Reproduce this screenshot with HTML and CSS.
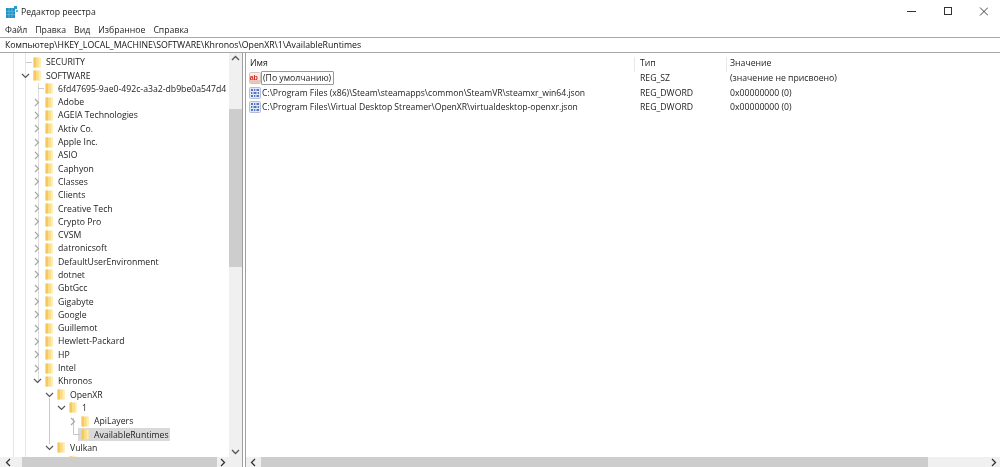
FILE: index.html
```html
<!DOCTYPE html>
<html lang="ru">
<head>
<meta charset="utf-8">
<title>Редактор реестра</title>
<link rel="stylesheet" href="styles.css">
</head>
<body>
<svg class="defs" width="0" height="0" aria-hidden="true">
  <defs>
    <symbol id="folder" viewBox="0 0 8 11">
      <path d="M0.5 0.5H7.5V10.5H0.5Z" fill="#fbdc85"/>
      <path d="M0.5 0.5H3V10.5H0.5Z" fill="#f7c95c"/>
      <path d="M5.8 1H7.500V10H5.800Z" fill="#ffedb4"/>
    </symbol>
    <symbol id="open" viewBox="0 0 9 6"><path d="M1 1L4.5 4.5L8 1" fill="none" stroke="#555" stroke-width="1.2"/></symbol>
    <symbol id="closed" viewBox="0 0 6 9"><path d="M1 1L4.5 4.5L1 8" fill="none" stroke="#a6a6a6" stroke-width="1.2"/></symbol>
    <symbol id="ico-bin" viewBox="0 0 12 12">
      <rect x="0.500" y="0.500" width="11" height="11" rx="1" fill="#e4e9f6" stroke="#b4bdd6"/>
      <path d="M2 3h2M5 3h1.300M7.500 3h2.500M2 6h1.300M4.500 6h3M8.700 6h1.300M2 9h2M5 9h1.300M7.500 9h2.500" stroke="#2a4fb4" stroke-width="1.700" fill="none"/>
    </symbol>
  </defs>
</svg>
<div class="window">
  <header class="titlebar">
    <svg class="appicon" viewBox="0 0 12 12" width="12" height="12">
      <rect x="0" y="2" width="9" height="10" fill="#1f8fc4"/>
      <path d="M3 2V12M6 2V12M0 5.300H9M0 8.600H9" stroke="#7cc6e6" stroke-width="0.6"/>
      <rect x="8" y="0" width="3" height="3" fill="#2a9bd0"/>
      <rect x="10" y="4" width="2" height="2" fill="#58b4dc"/>
    </svg>
    <span class="apptitle">Редактор реестра</span>
    <div class="controls">
      <svg class="ctl" viewBox="0 0 36 20" width="36" height="20"><path d="M27 10.500H36" stroke="#333"/></svg>
      <svg class="ctl" viewBox="0 0 36 20" width="36" height="20"><rect x="28.500" y="6.500" width="7" height="7" fill="none" stroke="#333"/></svg>
      <svg class="ctl" viewBox="0 0 36 20" width="36" height="20"><path d="M28 6.500L36 14.500M36 6.500L28 14.500" stroke="#444" fill="none"/></svg>
    </div>
  </header>
  <nav class="menubar">
    <span>Файл</span><span>Правка</span><span>Вид</span><span>Избранное</span><span>Справка</span>
  </nav>
  <div class="address">Компьютер\HKEY_LOCAL_MACHINE\SOFTWARE\Khronos\OpenXR\1\AvailableRuntimes</div>
  <main class="panes">
    <section class="treepane">
      <div class="treebody">
        <div class="tree">
          <span class="guide g1"></span><span class="guide g2"></span><span class="guide g3"></span><span class="guide g4"></span><span class="guide g5"></span>
          <div class="row l0"><span class="tog"><span class="stub"></span></span><svg class="fld"><use href="#folder"/></svg><span class="lbl">SECURITY</span></div>
          <div class="row l0"><span class="tog"><svg class="op"><use href="#open"/></svg></span><svg class="fld"><use href="#folder"/></svg><span class="lbl">SOFTWARE</span></div>
          <div class="row l1"><span class="tog"><span class="stub"></span></span><svg class="fld"><use href="#folder"/></svg><span class="lbl">6fd47695-9ae0-492c-a3a2-db9be0a547d4</span></div>
          <div class="row l1"><span class="tog"><svg class="cl"><use href="#closed"/></svg></span><svg class="fld"><use href="#folder"/></svg><span class="lbl">Adobe</span></div>
          <div class="row l1"><span class="tog"><svg class="cl"><use href="#closed"/></svg></span><svg class="fld"><use href="#folder"/></svg><span class="lbl">AGEIA Technologies</span></div>
          <div class="row l1"><span class="tog"><svg class="cl"><use href="#closed"/></svg></span><svg class="fld"><use href="#folder"/></svg><span class="lbl">Aktiv Co.</span></div>
          <div class="row l1"><span class="tog"><svg class="cl"><use href="#closed"/></svg></span><svg class="fld"><use href="#folder"/></svg><span class="lbl">Apple Inc.</span></div>
          <div class="row l1"><span class="tog"><svg class="cl"><use href="#closed"/></svg></span><svg class="fld"><use href="#folder"/></svg><span class="lbl">ASIO</span></div>
          <div class="row l1"><span class="tog"><svg class="cl"><use href="#closed"/></svg></span><svg class="fld"><use href="#folder"/></svg><span class="lbl">Caphyon</span></div>
          <div class="row l1"><span class="tog"><svg class="cl"><use href="#closed"/></svg></span><svg class="fld"><use href="#folder"/></svg><span class="lbl">Classes</span></div>
          <div class="row l1"><span class="tog"><svg class="cl"><use href="#closed"/></svg></span><svg class="fld"><use href="#folder"/></svg><span class="lbl">Clients</span></div>
          <div class="row l1"><span class="tog"><svg class="cl"><use href="#closed"/></svg></span><svg class="fld"><use href="#folder"/></svg><span class="lbl">Creative Tech</span></div>
          <div class="row l1"><span class="tog"><svg class="cl"><use href="#closed"/></svg></span><svg class="fld"><use href="#folder"/></svg><span class="lbl">Crypto Pro</span></div>
          <div class="row l1"><span class="tog"><svg class="cl"><use href="#closed"/></svg></span><svg class="fld"><use href="#folder"/></svg><span class="lbl">CVSM</span></div>
          <div class="row l1"><span class="tog"><svg class="cl"><use href="#closed"/></svg></span><svg class="fld"><use href="#folder"/></svg><span class="lbl">datronicsoft</span></div>
          <div class="row l1"><span class="tog"><svg class="cl"><use href="#closed"/></svg></span><svg class="fld"><use href="#folder"/></svg><span class="lbl">DefaultUserEnvironment</span></div>
          <div class="row l1"><span class="tog"><svg class="cl"><use href="#closed"/></svg></span><svg class="fld"><use href="#folder"/></svg><span class="lbl">dotnet</span></div>
          <div class="row l1"><span class="tog"><svg class="cl"><use href="#closed"/></svg></span><svg class="fld"><use href="#folder"/></svg><span class="lbl">GbtGcc</span></div>
          <div class="row l1"><span class="tog"><svg class="cl"><use href="#closed"/></svg></span><svg class="fld"><use href="#folder"/></svg><span class="lbl">Gigabyte</span></div>
          <div class="row l1"><span class="tog"><svg class="cl"><use href="#closed"/></svg></span><svg class="fld"><use href="#folder"/></svg><span class="lbl">Google</span></div>
          <div class="row l1"><span class="tog"><svg class="cl"><use href="#closed"/></svg></span><svg class="fld"><use href="#folder"/></svg><span class="lbl">Guillemot</span></div>
          <div class="row l1"><span class="tog"><svg class="cl"><use href="#closed"/></svg></span><svg class="fld"><use href="#folder"/></svg><span class="lbl">Hewlett-Packard</span></div>
          <div class="row l1"><span class="tog"><svg class="cl"><use href="#closed"/></svg></span><svg class="fld"><use href="#folder"/></svg><span class="lbl">HP</span></div>
          <div class="row l1"><span class="tog"><svg class="cl"><use href="#closed"/></svg></span><svg class="fld"><use href="#folder"/></svg><span class="lbl">Intel</span></div>
          <div class="row l1"><span class="tog"><svg class="op"><use href="#open"/></svg></span><svg class="fld"><use href="#folder"/></svg><span class="lbl">Khronos</span></div>
          <div class="row l2"><span class="tog"><svg class="op"><use href="#open"/></svg></span><svg class="fld"><use href="#folder"/></svg><span class="lbl">OpenXR</span></div>
          <div class="row l3"><span class="tog"><svg class="op"><use href="#open"/></svg></span><svg class="fld"><use href="#folder"/></svg><span class="lbl">1</span></div>
          <div class="row l4"><span class="tog"><svg class="cl"><use href="#closed"/></svg></span><svg class="fld"><use href="#folder"/></svg><span class="lbl">ApiLayers</span></div>
          <div class="row l4 selected"><span class="tog"><span class="stub"></span></span><span class="selbox"><svg class="fld"><use href="#folder"/></svg><span class="lbl">AvailableRuntimes</span></span></div>
          <div class="row l2"><span class="tog"><svg class="op"><use href="#open"/></svg></span><svg class="fld"><use href="#folder"/></svg><span class="lbl">Vulkan</span></div>
          <div class="row l3"><span class="tog"></span><svg class="fld"><use href="#folder"/></svg></div>
        </div>
        <div class="vscroll">
          <svg class="arr" viewBox="0 0 9 6" width="9" height="6"><path d="M1 5L4.500 1.500L8 5" fill="none" stroke="#555" stroke-width="1.300"/></svg>
          <div class="vtrack"><div class="vthumb"></div></div>
          <svg class="arr" viewBox="0 0 9 6" width="9" height="6"><path d="M1 1L4.500 4.500L8 1" fill="none" stroke="#555" stroke-width="1.300"/></svg>
        </div>
      </div>
      <div class="hscroll treeh">
        <svg class="harr" viewBox="0 0 6 9" width="6" height="9"><path d="M5 1L1.500 4.500L5 8" fill="none" stroke="#333" stroke-width="1.300"/></svg>
        <div class="hthumb"></div>
        <svg class="harr" viewBox="0 0 6 9" width="6" height="9"><path d="M1 1L4.500 4.500L1 8" fill="none" stroke="#333" stroke-width="1.300"/></svg>
      </div>
    </section>
    <section class="listpane">
      <div class="listbody">
        <div class="grid head">
          <span class="cname">Имя</span><span class="ctype">Тип</span><span class="cval">Значение</span>
        </div>
        <div class="grid item">
          <span class="cname">
            <svg class="ric" viewBox="0 0 12 12" width="12" height="12"><rect x="0.500" y="0.500" width="11" height="11" rx="1" fill="#f8ece8" stroke="#d4c4c0"/><path d="M1 8H11V11H1Z" fill="#e6c9bc"/><text x="0.700" y="7.800" class="abtxt">ab</text></svg>
            <span class="focusbox">(По умолчанию)</span>
          </span>
          <span class="ctype">REG_SZ</span><span class="cval">(значение не присвоено)</span>
        </div>
        <div class="grid item">
          <span class="cname"><svg class="ric"><use href="#ico-bin"/></svg><span class="nm">C:\Program Files (x86)\Steam\steamapps\common\SteamVR\steamxr_win64.json</span></span>
          <span class="ctype">REG_DWORD</span><span class="cval">0x00000000 (0)</span>
        </div>
        <div class="grid item">
          <span class="cname"><svg class="ric"><use href="#ico-bin"/></svg><span class="nm">C:\Program Files\Virtual Desktop Streamer\OpenXR\virtualdesktop-openxr.json</span></span>
          <span class="ctype">REG_DWORD</span><span class="cval">0x00000000 (0)</span>
        </div>
      </div>
      <div class="hscroll listh">
        <svg class="harr" viewBox="0 0 6 9" width="6" height="9"><path d="M5 1L1.500 4.500L5 8" fill="none" stroke="#333" stroke-width="1.300"/></svg>
        <div class="hthumb"></div>
        <svg class="harr" viewBox="0 0 6 9" width="6" height="9"><path d="M1 1L4.500 4.500L1 8" fill="none" stroke="#333" stroke-width="1.300"/></svg>
      </div>
    </section>
  </main>
</div>
</body>
</html>
```
FILE: styles.css
```css
* { box-sizing: border-box; }
html, body { margin: 0; padding: 0; height: 467px; overflow: hidden; background: #fff; }
body { font-family: "Open Sans", "Noto Sans", sans-serif; font-size: 8.7px; color: #222; }
.defs { position: absolute; }
.window { width: 1000px; height: 467px; display: flex; flex-direction: column; overflow: hidden; filter: blur(0.3px); }

.titlebar { height: 23px; display: flex; align-items: center; padding-left: 6px; }
.appicon { margin-right: 3px; }
.apptitle { font-size: 8.7px; color: #222; }
.controls { margin-left: auto; display: flex; padding-right: 12px; margin-top: -1px; }
.ctl { display: block; }

.menubar { height: 14px; display: flex; gap: 8px; padding-left: 5px; align-items: center; color: #222; }

.address { height: 16px; border-top: 1px solid #a8a8a8; border-bottom: 1px solid #a8a8a8; padding-left: 5px; line-height: 14px; white-space: nowrap; color: #111; font-size: 8.75px; }

.panes { flex: 1; display: flex; min-height: 0; }

.treepane { width: 243px; flex: none; display: flex; flex-direction: column; border-right: 1px solid #a0a0a0; }
.treebody { flex: 1; display: flex; min-height: 0; overflow: hidden; }
.tree { width: 229px; flex: none; position: relative; overflow: hidden; padding-top: 2.6px; }
.vscroll { flex: 1; background: #f0f0f0; display: flex; flex-direction: column; align-items: center; }
.vscroll .arr { margin: 2px 0; flex: none; }
.vtrack { flex: 1; width: 100%; padding-top: 46px; }
.vthumb { height: 158px; background: #cdcdcd; }

.row { height: 13.3px; display: flex; align-items: center; white-space: nowrap; }
.l0 { padding-left: 20px; }
.l1 { padding-left: 32px; }
.l2 { padding-left: 44px; }
.l3 { padding-left: 56px; }
.l4 { padding-left: 68px; }
.tog { width: 13px; height: 13px; flex: none; display: flex; align-items: center; justify-content: center; padding-right: 3px; position: relative; }
.op { width: 9px; height: 6px; }
.cl { width: 6px; height: 9px; }
.stub { position: absolute; left: 6px; top: 6px; width: 6px; height: 1px; background: #c8c8c8; }
.fld { width: 8px; height: 11px; flex: none; }
.lbl { margin-left: 5px; color: #222; }
.selbox { display: flex; align-items: center; background: #d9d9d9; height: 13.3px; padding-right: 1px; margin-left: -3px; padding-left: 3px; }

.guide { position: absolute; width: 1px; background: #e6e6e6; }
.g1 { left: 13px; top: 0; bottom: 0; }
.g2 { left: 25px; top: 0; bottom: 0; }
.g3 { left: 38px; top: 30px; height: 300px; background: #dcdcdc; }
.g4 { left: 49px; top: 345px; height: 46px; background: #c8c8c8; }
.g5 { left: 73px; top: 365px; height: 17px; background: #c8c8c8; }

.hscroll { height: 10px; flex: none; background: #f0f0f0; display: flex; align-items: center; }
.treeh { padding-left: 5px; padding-right: 16px; }
.treeh .hthumb { margin: 0 3px 0 11px; width: 195px; }
.listh { padding: 0 3px 0 4px; }
.listh .hthumb { flex: 1; margin: 0 63px 0 5px; }
.hthumb { height: 100%; background: #cdcdcd; }
.harr { flex: none; }

.listpane { flex: 1; min-width: 0; display: flex; flex-direction: column; margin-left: 2px; border-left: 1px solid #a0a0a0; }
.listbody { flex: 1; min-height: 0; }
.grid { display: grid; grid-template-columns: 394px 90px 1fr; white-space: nowrap; }
.head { height: 18px; align-items: center; padding-top: 1px; }
.head .cname { padding-left: 4px; }
.head .ctype { position: relative; }
.head .ctype::before, .head .cval::before { content: ""; position: absolute; top: 0; width: 1px; height: 15px; background: #e8e8e8; }
.head .ctype::before { left: -6px; }
.head .cval { position: relative; }
.head .cval::before { left: -4px; }
.item { height: 14.5px; align-items: center; }
.cname { display: flex; align-items: center; padding-left: 3px; min-width: 0; }
.ric { width: 12px; height: 12px; flex: none; }
.abtxt { font-family: "Liberation Sans", sans-serif; font-size: 7px; font-weight: 700; fill: #d0281c; }
.nm { margin-left: 1px; font-size: 8.6px; }
.focusbox { border: 1px solid #9a9a9a; border-radius: 1px; padding: 0 2px 0 1px; height: 14px; line-height: 12px; color: #222; }
```
